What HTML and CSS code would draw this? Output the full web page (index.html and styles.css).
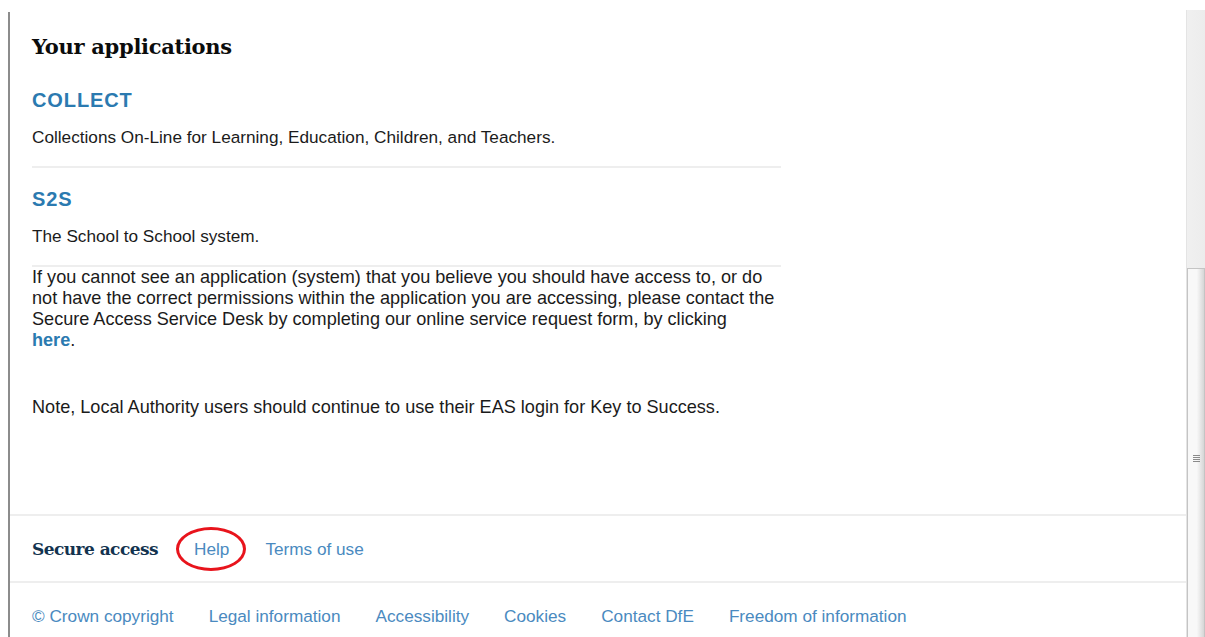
FILE: index.html
```html
<!DOCTYPE html>
<html lang="en">
<head>
<meta charset="utf-8">
<title>Your applications - Secure access</title>
<link rel="stylesheet" href="styles.css">
</head>
<body>
<div class="frame">
  <div class="page">
    <main class="content">
      <h1 class="title">Your applications</h1>
      <ul class="apps">
        <li class="app">
          <a class="app-name" href="#">COLLECT</a>
          <p class="app-desc">Collections On-Line for Learning, Education, Children, and Teachers.</p>
        </li>
        <li class="app">
          <a class="app-name" href="#">S2S</a>
          <p class="app-desc">The School to School system.</p>
        </li>
      </ul>
      <p class="info">If you cannot see an application (system) that you believe you should have access to, or do not have the correct permissions within the application you are accessing, please contact the Secure Access Service Desk by completing our online service request form, by clicking<br><a class="strong-link" href="#">here</a>.</p>
      <p class="note">Note, Local Authority users should continue to use their EAS login for Key to Success.</p>
    </main>
    <footer class="footer">
      <div class="service-bar">
        <span class="service-name">Secure access</span>
        <a class="foot-link circled" href="#">Help</a>
        <a class="foot-link" href="#">Terms of use</a>
      </div>
      <div class="legal-bar">
        <a class="foot-link" href="#">© Crown copyright</a>
        <a class="foot-link" href="#">Legal information</a>
        <a class="foot-link" href="#">Accessibility</a>
        <a class="foot-link" href="#">Cookies</a>
        <a class="foot-link" href="#">Contact DfE</a>
        <a class="foot-link" href="#">Freedom of information</a>
      </div>
    </footer>
  </div>
  <div class="scrollbar">
    <div class="track"></div>
    <div class="thumb"><span class="grip"></span></div>
  </div>
</div>
</body>
</html>
```

FILE: styles.css
```css
*, *::before, *::after { box-sizing: border-box; }

html, body {
  margin: 0;
  padding: 0;
  background: #fff;
  height: 100%;
  overflow: hidden;
}

body {
  font-family: "Liberation Sans", Arial, sans-serif;
  color: #1b1b1b;
}

.frame {
  display: flex;
  height: 637px;
  padding-top: 10px;
}

.page {
  flex: 1;
  margin-left: 8px;
  margin-top: 2px;
  border-left: 2px solid #8c8c8c;
  display: flex;
  flex-direction: column;
}

.content {
  flex: 1;
  padding: 20px 0 0 22px;
}

.title {
  font-family: "DejaVu Serif", Georgia, serif;
  font-weight: bold;
  font-size: 21px;
  line-height: 30px;
  margin: 0 0 26px;
  color: #0b0c0c;
  letter-spacing: -0.3px;
}

.apps {
  list-style: none;
  margin: 0;
  padding: 0;
  width: 749px;
}

.app {
  border-bottom: 2px solid #eeeeee;
  padding-bottom: 19px;
  margin-bottom: 19px;
}

.app:last-child {
  margin-bottom: 0;
}

.app-name {
  display: block;
  font-weight: bold;
  font-size: 20px;
  line-height: 24px;
  letter-spacing: 0.9px;
  color: #2b7ab0;
  text-decoration: none;
}

.app-desc {
  margin: 15px 0 0;
  font-size: 17.2px;
  line-height: 20px;
  color: #1b1b1b;
}

.info {
  width: 756px;
  margin: 0;
  font-size: 18.1px;
  line-height: 21px;
}

.strong-link {
  color: #2b7ab0;
  font-weight: bold;
  text-decoration: none;
}

.note {
  margin: 46px 0 0;
  font-size: 18.1px;
  line-height: 21px;
}

.footer {
  display: flex;
  flex-direction: column;
}

.service-bar,
.legal-bar {
  border-top: 2px solid #eeeeee;
  display: flex;
  padding-left: 22px;
}

.service-bar {
  height: 67px;
  align-items: center;
  gap: 36px;
}

.legal-bar {
  height: 56px;
  align-items: flex-start;
  padding-top: 23px;
  gap: 35px;
}

.service-name {
  font-family: "DejaVu Serif", Georgia, serif;
  font-weight: bold;
  font-size: 17px;
  color: #13334f;
  letter-spacing: -0.55px;
}

.foot-link {
  font-size: 17.2px;
  line-height: 20px;
  color: #4a8ac0;
  text-decoration: none;
}

.circled {
  position: relative;
}

/* red ring drawn round the Help link */
.circled::after {
  content: "";
  position: absolute;
  left: -18px;
  top: -12px;
  width: 70px;
  height: 44px;
  border: 3px solid #e8141c;
  border-radius: 50%;
}

.scrollbar {
  width: 19px;
  display: flex;
  flex-direction: column;
  border-left: 1px solid #e4e4e4;
}

.track {
  height: 258px;
  background: linear-gradient(to right, #f0f0f0, #ececec);
}

.thumb {
  flex: 1;
  border: 1px solid #c4c4c4;
  border-bottom: none;
  background: linear-gradient(to right, #f8f8f8 0, #f8f8f8 55%, #d6d6d6 100%);
  display: flex;
  justify-content: center;
  padding-top: 186px;
}

.grip {
  display: block;
  width: 7px;
  height: 7px;
  background: repeating-linear-gradient(to bottom, #8a8a8a 0, #8a8a8a 1px, transparent 1px, transparent 2px);
}
```
